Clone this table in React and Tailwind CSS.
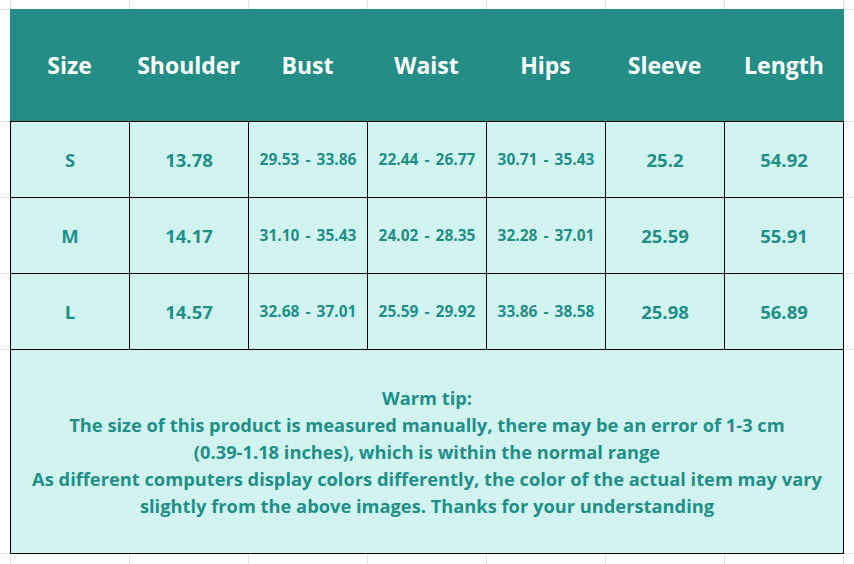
import React from "react";

const cols = ["Size", "Shoulder", "Bust", "Waist", "Hips", "Sleeve", "Length"];
const rows = [
  ["S", "13.78", "29.53 - 33.86", "22.44 - 26.77", "30.71 - 35.43", "25.2", "54.92"],
  ["M", "14.17", "31.10 - 35.43", "24.02 - 28.35", "32.28 - 37.01", "25.59", "55.91"],
  ["L", "14.57", "32.68 - 37.01", "25.59 - 29.92", "33.86 - 38.58", "25.98", "56.89"],
];

const font = { fontFamily: '"Open Sans", "Noto Sans CJK KR", sans-serif' };

export default function App() {
  const bg = [];
  for (let r = 0; r < 7; r++) {
    for (let c = 0; c < 9; c++) {
      bg.push(
        <div
          key={`${r}-${c}`}
          className={`${c > 0 ? "border-l" : ""} ${r > 0 ? "border-t" : ""} border-[#e2e2e2]`}
          style={{ gridRow: r + 1, gridColumn: c + 1 }}
        />
      );
    }
  }
  return (
    <div
      className="grid h-[564px] w-[854px] overflow-hidden bg-white grid-cols-[10px_repeat(7,119px)_1fr] grid-rows-[9px_112px_76px_76px_76px_204px_1fr]"
      style={font}
    >
      {bg}
      <div className="col-start-2 col-span-7 row-start-2 row-span-5 z-10 flex w-[834px] h-[545px] flex-col self-start">
        <div className="grid h-[112px] grid-cols-[repeat(6,119px)_120px] bg-[#238d86] text-white">
          {cols.map((c) => (
            <div key={c} className="flex items-center justify-center text-[23px] font-bold">
              {c}
            </div>
          ))}
        </div>
        {rows.map((row, i) => (
          <div key={i} className="grid h-[76px] grid-cols-[repeat(6,119px)_120px] border-t border-black bg-[#d2f4f1] text-[#1f8f88]">
            {row.map((v, j) => (
              <div
                key={j}
                className={`flex items-center justify-center border-l border-black font-bold ${
                  j === 6 ? "border-r" : ""
                } ${j >= 2 && j <= 4 ? "text-[15.5px] [word-spacing:2px]" : "text-[18.5px]"}`}
              >
                {v}
              </div>
            ))}
          </div>
        ))}
        <div className="flex h-[205px] flex-col items-center justify-center border border-black bg-[#d2f4f1] text-center text-[18.3px] font-bold leading-[27px] text-[#1f8f88]">
          <div>Warm tip:</div>
          <div>The size of this product is measured manually, there may be an error of 1-3 cm</div>
          <div>(0.39-1.18 inches), which is within the normal range</div>
          <div>As different computers display colors differently, the color of the actual item may vary</div>
          <div>slightly from the above images. Thanks for your understanding</div>
        </div>
      </div>
    </div>
  );
}
